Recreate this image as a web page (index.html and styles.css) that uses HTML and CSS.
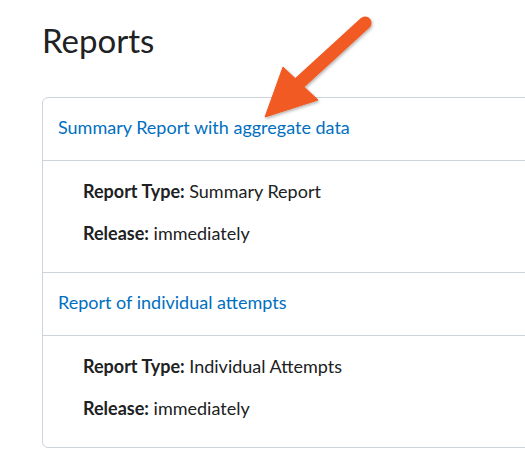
FILE: index.html
```html
<!DOCTYPE html>
<html>
<head>
<meta charset="utf-8">
<link rel="stylesheet" href="styles.css">
</head>
<body>
<main class="page">
  <h1 class="title">Reports</h1>
  <section class="card">
    <div class="card-head"><a class="report-link" href="#">Summary Report with aggregate data</a></div>
    <div class="card-body">
      <p class="field"><strong>Report Type:</strong> Summary Report</p>
      <p class="field"><strong>Release:</strong> immediately</p>
    </div>
    <div class="card-head"><a class="report-link" href="#">Report of individual attempts</a></div>
    <div class="card-body">
      <p class="field"><strong>Report Type:</strong> Individual Attempts</p>
      <p class="field"><strong>Release:</strong> immediately</p>
    </div>
  </section>
</main>
<svg class="arrow" width="140" height="120" viewBox="0 0 140 120" aria-hidden="true">
  <defs>
    <filter id="sh" x="-20%" y="-20%" width="140%" height="140%">
      <feDropShadow dx="1" dy="1.5" stdDeviation="1.5" flood-color="#000" flood-opacity="0.3"/>
    </filter>
  </defs>
  <g filter="url(#sh)" fill="#f15a24" stroke="#f15a24">
    <line x1="115" y1="13" x2="45" y2="77" stroke-width="13" stroke-linecap="round"/>
    <polygon points="15,107 33,57 68,90" stroke-width="1" stroke-linejoin="round"/>
  </g>
</svg>
</body>
</html>
```
FILE: styles.css
```css
html, body {
  margin: 0;
  padding: 0;
  background: #ffffff;
}
body {
  font-family: Lato, "Noto Sans", sans-serif;
  color: #202122;
  width: 525px;
  height: 468px;
  overflow: hidden;
  position: relative;
}
.page {
  padding: 18px 0 0 42px;
  overflow: hidden;
}
.title {
  margin: 0 0 35px 0;
  font-size: 33px;
  font-weight: 400;
  line-height: 44px;
  color: #202122;
}
.card {
  width: calc(100% + 12px);
  border: 1px solid #cdd3dc;
  border-radius: 6px;
  box-sizing: border-box;
}
.card-head {
  height: 62px;
  display: flex;
  align-items: center;
  padding-left: 15px;
  border-bottom: 1px solid #cdd3dc;
}
.report-link {
  font-size: 18px;
  color: #006fbf;
  text-decoration: none;
  position: relative;
  top: -2px;
}
.card-body {
  padding: 9px 0 18px 40px;
}
.card-body:not(:last-child) {
  border-bottom: 1px solid #cdd3dc;
}
.field {
  margin: 0;
  font-size: 18px;
  line-height: 42px;
  color: #202122;
}
.field strong {
  font-weight: 700;
}
.arrow {
  position: absolute;
  left: 250px;
  top: 10px;
}
```
